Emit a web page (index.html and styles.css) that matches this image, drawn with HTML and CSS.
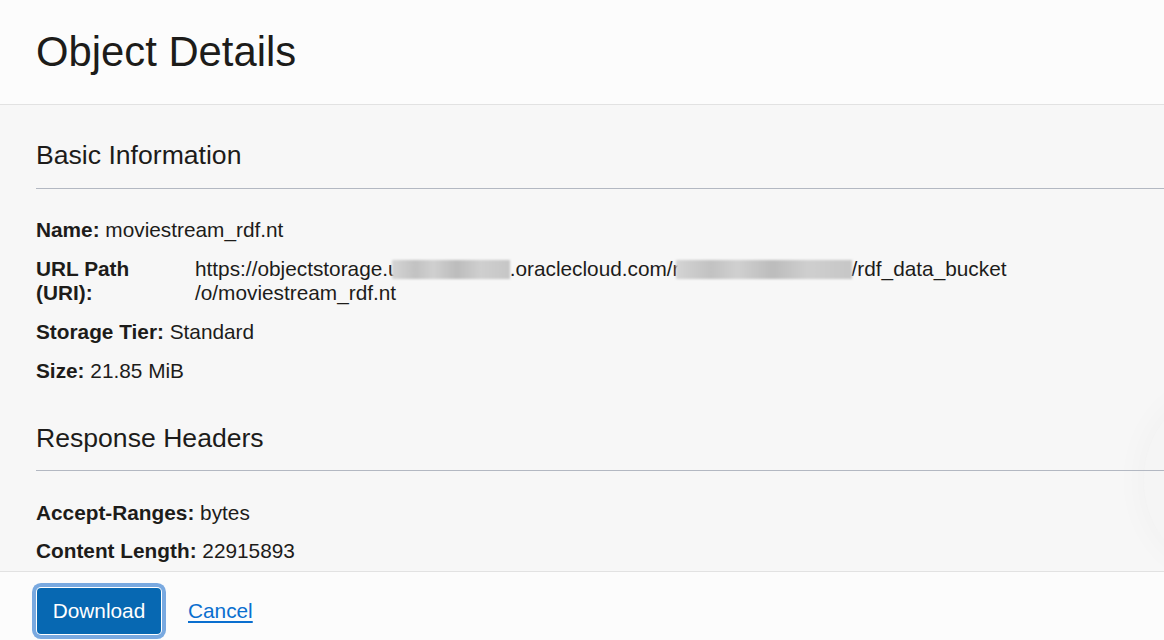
FILE: index.html
```html
<!DOCTYPE html>
<html lang="en">
<head>
<meta charset="utf-8">
<title>Object Details</title>
<link rel="stylesheet" href="styles.css">
</head>
<body>
<div class="panel">
  <header class="panel-header">
    <h1 class="panel-title">Object Details</h1>
  </header>
  <main class="panel-body">
    <div class="float-shadow"></div>
    <section class="section">
      <h2 class="section-title">Basic Information</h2>
      <div class="rows">
        <div class="row"><span class="label">Name:</span> moviestream_rdf.nt</div>
        <div class="row row-grid">
          <span class="label label-narrow">URL Path (URI):</span>
          <span class="value">https://objectstorage.u<span class="redact redact-a"></span>.oraclecloud.com/r<span class="redact redact-b"></span>/rdf_data_bucket<br>/o/moviestream_rdf.nt</span>
        </div>
        <div class="row"><span class="label">Storage Tier:</span> Standard</div>
        <div class="row"><span class="label">Size:</span> 21.85 MiB</div>
      </div>
    </section>
    <section class="section section-next">
      <h2 class="section-title section-title-b">Response Headers</h2>
      <div class="rows">
        <div class="row"><span class="label">Accept-Ranges:</span> bytes</div>
        <div class="row"><span class="label">Content Length:</span> 22915893</div>
      </div>
    </section>
  </main>
  <footer class="panel-footer">
    <button class="btn-primary" type="button">Download</button>
    <a class="link" href="#">Cancel</a>
  </footer>
</div>
</body>
</html>
```
FILE: styles.css
```css
* { box-sizing: border-box; }
html, body {
  margin: 0;
  padding: 0;
  height: 100%;
}
body {
  font-family: "Liberation Sans", Arial, sans-serif;
  color: #1d1c1a;
  background: #f7f7f7;
  overflow: hidden;
}
.panel {
  display: flex;
  flex-direction: column;
  height: 640px;
  width: 1164px;
}
.panel-header {
  height: 105px;
  flex: none;
  background: #fcfcfc;
  border-bottom: 1px solid #e2e2e2;
  padding: 27px 0 0 36px;
}
.panel-title {
  margin: 0;
  font-weight: 400;
  font-size: 41.8px;
  line-height: 50px;
}
.panel-body {
  position: relative;
  flex: 1;
  overflow: hidden;
  background: #f7f7f7;
  padding-left: 36px;
}
.section {
  position: relative;
  z-index: 1;
}
.section-title {
  margin: 0;
  padding: 34px 0 17px;
  font-weight: 400;
  font-size: 26.6px;
  line-height: 32px;
  border-bottom: 1px solid #b3b8c2;
}
.section-next .section-title {
  padding-top: 39px;
  padding-bottom: 16px;
}
.rows {
  display: flex;
  flex-direction: column;
  gap: 15px;
  padding-top: 29px;
}
.section-next .rows {
  padding-top: 30px;
  gap: 14px;
}
.row {
  font-size: 20.8px;
  line-height: 24px;
}
.label {
  font-weight: 700;
}
.row-grid {
  display: grid;
  grid-template-columns: 130px 1fr;
  column-gap: 29px;
}
.redact {
  display: inline-block;
  position: relative;
  height: 19px;
  vertical-align: -3px;
  background: linear-gradient(90deg, #d4d4d4 0%, #c2c2c2 20%, #d0d0d0 35%, #bcbcbc 55%, #cfcfcf 75%, #c6c6c6 100%);
  filter: blur(1.2px);
}
.redact-a { width: 118px; margin-left: -8px; }
.redact-b { width: 176px; margin-left: -4px; }
.float-shadow {
  position: absolute;
  right: -120px;
  top: 290px;
  width: 140px;
  height: 170px;
  border-radius: 50%;
  background: #f5f5f5;
  box-shadow: 0 0 36px rgba(0, 0, 0, 0.035);
}
.panel-footer {
  height: 69px;
  flex: none;
  background: #fcfcfc;
  border-top: 1px solid #e2e2e2;
  display: flex;
  align-items: center;
  gap: 27px;
  padding: 9px 0 0 37px;
}
.btn-primary {
  height: 46px;
  width: 124px;
  background: #0768b2;
  color: #ffffff;
  border: none;
  border-radius: 4px;
  font-family: "Liberation Sans", Arial, sans-serif;
  font-size: 20.8px;
  padding: 0;
  box-shadow: 0 0 0 1px #ffffff, 0 0 0 5px #79a9e0;
  cursor: pointer;
}
.link {
  color: #0a6fcf;
  font-size: 20.8px;
  text-decoration: underline;
  text-underline-offset: 3px;
}
```
